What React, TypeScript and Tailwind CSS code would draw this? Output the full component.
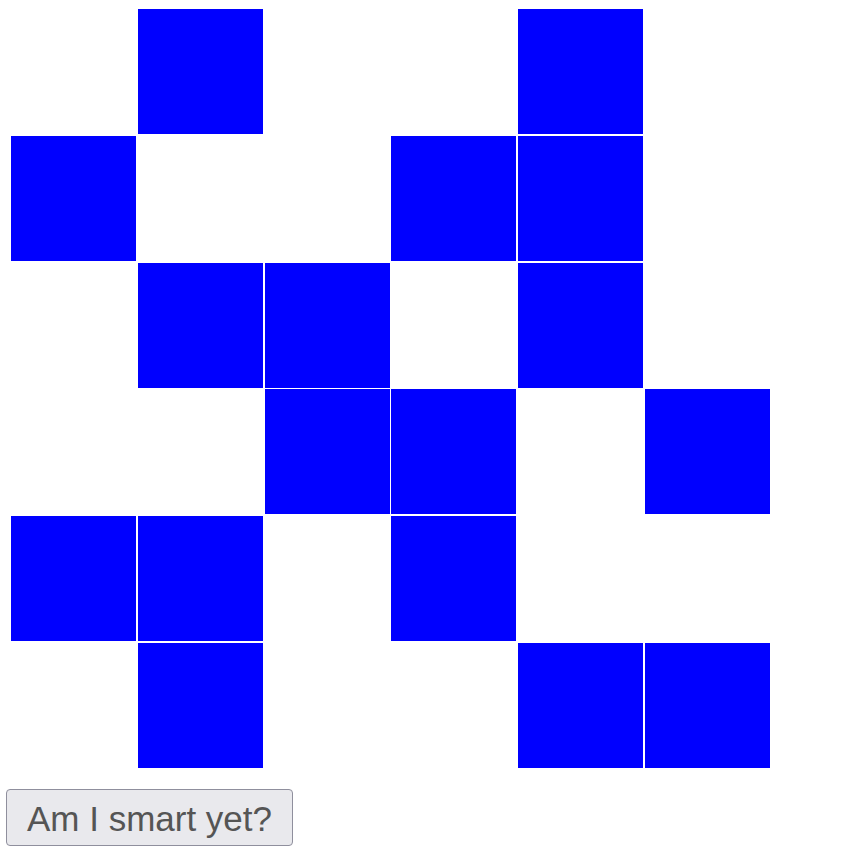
import React from 'react';

const pattern = [
  [0, 1, 0, 0, 1, 0],
  [1, 0, 0, 1, 1, 0],
  [0, 1, 1, 0, 1, 0],
  [0, 0, 1, 1, 0, 1],
  [1, 1, 0, 1, 0, 0],
  [0, 1, 0, 0, 1, 1],
];

export default function App() {
  return (
    <div className="bg-white w-[850px] h-[865px]">
      {/* Board */}
      <div className="pt-[9px] pl-[11px]">
        <div className="grid grid-cols-[repeat(6,125px)] grid-rows-[repeat(6,125px)] gap-[1.8px] w-fit">
          {pattern.flat().map((on, i) => (
            <div key={i} className={on ? 'bg-[#0000ff]' : 'bg-white'} />
          ))}
        </div>
      </div>

      <div className="pl-[6px] pt-[21px]">
        <button
          type="button"
          className="w-[287px] h-[57px] pt-[3px] rounded-[4px] border border-[#8f8f9d] bg-[#e9e9ed] text-[#555] text-[35px] font-light leading-none"
          style={{ fontFamily: '"Liberation Sans", Arial, sans-serif' }}
        >
          Am I smart yet?
        </button>
      </div>
    </div>
  );
}
